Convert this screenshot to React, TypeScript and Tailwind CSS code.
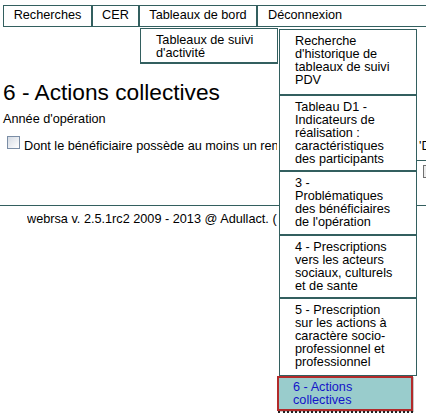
import React from "react";

const B = "border-[#335f5f]";

function SubItem({ lines, pb }: { lines: string[]; pb: string }) {
  return (
    <div className={`border ${B} bg-white pt-[5px] ${pb} pl-[15px] pr-[18px] leading-[13px]`}>
      {lines.join(" ")}
    </div>
  );
}

export default function App() {
  return (
    <div className="relative w-[426px] h-[420px] overflow-hidden bg-white text-black font-['Liberation_Sans',Arial,sans-serif] text-[12.7px]">
      <nav className="pt-[5px] pl-[3px]">
        <ul className="flex">
          <li className={`h-[22px] w-[89px] shrink-0 border ${B} flex items-center justify-center`}>Recherches</li>
          <li className={`h-[22px] w-[47px] shrink-0 border ${B} flex items-center justify-center`}>CER</li>
          <li className={`relative h-[22px] w-[118px] shrink-0 border ${B} flex items-center justify-center`}>
            Tableaux de bord
            <div className={`absolute left-0 top-[22px] z-10 w-[138px] border ${B} bg-white`}>
              <div className={`relative border-b ${B} pt-[5px] pb-[2px] pl-[15px] pr-[18px] leading-[13px]`}>
                Tableaux de suivi d'activité
                <div className="absolute left-[138px] top-0 w-[138px] flex flex-col">
                  <SubItem pb="pb-[7px]" lines={["Recherche", "d'historique de", "tableaux de suivi", "PDV"]} />
                  <SubItem pb="pb-[4px]" lines={["Tableau D1 -", "Indicateurs de", "réalisation :", "caractéristiques", "des participants"]} />
                  <SubItem pb="pb-[5px]" lines={["3 -", "Problématiques", "des bénéficiaires", "de l'opération"]} />
                  <SubItem pb="pb-[4px]" lines={["4 - Prescriptions", "vers les acteurs", "sociaux, culturels", "et de sante"]} />
                  <SubItem pb="pb-[6px]" lines={["5 - Prescription", "sur les actions à", "caractère socio-", "professionnel et", "professionnel"]} />
                  <div className="-ml-[2px] w-[136px] border-2 border-[#b22a2a] bg-[#99cccc] pt-[3px] pb-[2px] pl-[14px] pr-[18px] leading-[13px] text-[#1414c8] shadow-[1px_1px_0_#c8c8c8]">
                    6 - Actions collectives
                  </div>
                  <div className="-ml-[1px] h-[3px] w-[135px] border-t-2 border-dotted border-[#222]" />
                </div>
              </div>
            </div>
          </li>
          <li className={`h-[22px] w-[200px] shrink-0 border ${B} flex items-center pl-[10px]`}>Déconnexion</li>
        </ul>
      </nav>

      <main>
        <div className="pl-[3px]">
          <h1 className="mt-[52px] text-[22.7px] leading-[26px] font-normal">6 - Actions collectives</h1>
          <div className="mt-[7px] leading-[15px]">Année d'opération</div>
          <div className="mt-[9px] flex items-start whitespace-nowrap">
            <span className="ml-[4px] mr-[4px] h-[13px] w-[13px] shrink-0 border border-[#7b8ea6] bg-gradient-to-br from-[#d5dbe4] to-white" />
            <span className="mt-[3px] leading-[15px] inline-block w-[253px] shrink-0 overflow-hidden">
              Dont le bénéficiaire possède au moins un rendez-vous
            </span>
            <span className="mt-[3px] ml-[142px] leading-[15px]">'D</span>
          </div>
          <div className={`ml-[414px] mt-[6px] border-t ${B} w-[40px]`}>
            <div className="ml-[6px] mt-[4px] h-[13px] w-[40px] border border-[#707070] bg-[#ececec]" />
          </div>
        </div>
        <div className={`mt-[27px] border-t ${B}`} />
        <div className="mt-[6px] pl-[27px] leading-[15px] whitespace-nowrap">
          <span className="inline-block w-[250px] overflow-hidden align-top">
            webrsa v. 2.5.1rc2 2009 - 2013 @ Adullact. ( CakePHP )
          </span>
        </div>
      </main>
    </div>
  );
}
